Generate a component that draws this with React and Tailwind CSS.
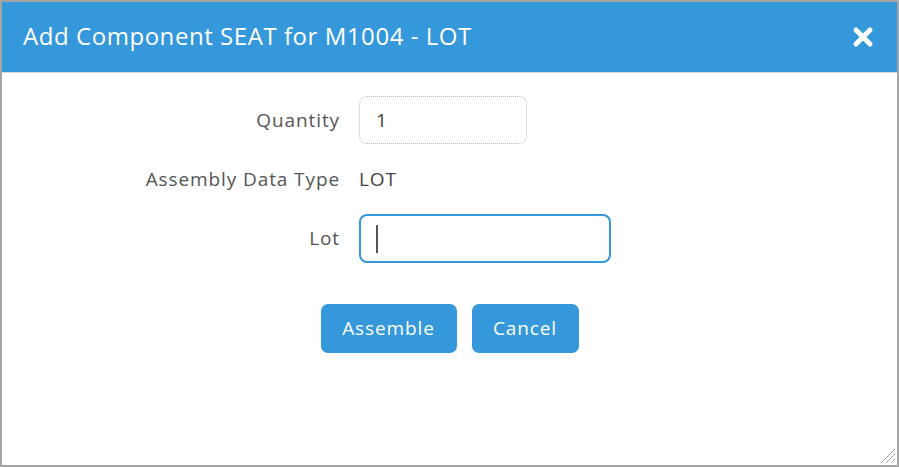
import React from 'react';

const font = { fontFamily: '"Open Sans", "Noto Sans", sans-serif' };

const AddComponentDialog = () => {
  return (
    <div
      className="relative w-[899px] h-[467px] border-2 border-[#a5a5a5] bg-white flex flex-col overflow-hidden"
      style={font}
    >
      <div className="h-[71px] bg-[#3598db] border-b border-[#d6d6d6] flex items-center justify-between pl-[21px] pr-[22px]">
        <h1 className="text-[24px] text-white tracking-[0.55px] pb-[2px]">Add Component SEAT for M1004 - LOT</h1>
        <button className="w-[24px] h-[24px] flex items-center justify-center">
          <svg width="22" height="22" viewBox="0 0 22 22">
            <path d="M4 4 L18 18 M18 4 L4 18" stroke="white" strokeWidth="5" strokeLinecap="round" />
          </svg>
        </button>
      </div>

      <div className="flex-1 pt-[23px]">
        <div className="grid grid-cols-[338px_auto] gap-x-[19px] gap-y-[20px] items-center text-[19px] tracking-[0.9px] text-[#555]">
          <label className="text-right">Quantity</label>
          <div className="w-[168px] h-[48px] border border-dotted border-[#bbb] rounded-[8px] flex items-center px-[16px] text-[#444]">
            1
          </div>

          <label className="text-right h-[30px] leading-[30px]">Assembly Data Type</label>
          <div className="h-[30px] leading-[30px] text-[#444]">LOT</div>

          <label className="text-right">Lot</label>
          <div className="w-[252px] h-[49px] border-2 border-[#3598db] rounded-[8px] flex items-center px-[15px]">
            <span className="w-[2px] h-[28px] bg-[#555]" />
          </div>
        </div>

        <div className="flex justify-center gap-[15px] mt-[41px]">
          <button className="w-[136px] h-[49px] bg-[#3598db] text-white text-[19px] tracking-[0.9px] rounded-[7px]">Assemble</button>
          <button className="w-[107px] h-[49px] bg-[#3598db] text-white text-[19px] tracking-[0.9px] rounded-[7px]">Cancel</button>
        </div>
      </div>

      <svg className="absolute right-[1px] bottom-[1px]" width="20" height="20" viewBox="0 0 20 20">
        <path d="M19 5 L5 19 M19 10 L10 19 M19 15 L15 19" stroke="#777" strokeWidth="1" strokeDasharray="2 1" />
      </svg>
    </div>
  );
};

export default function App() {
  return <AddComponentDialog />;
}
